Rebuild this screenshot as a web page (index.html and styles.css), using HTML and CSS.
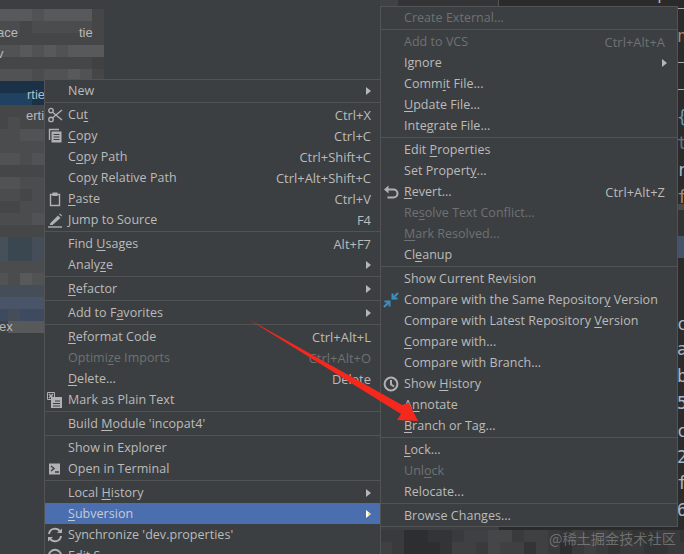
FILE: index.html
```html
<!DOCTYPE html>
<html lang="en">
<head>
<meta charset="utf-8">
<title>Context menu</title>
<link rel="stylesheet" href="styles.css">
</head>
<body>
<div class="screen">
  <div class="mosaic mosaic-top">
    <i class="e"></i><i class="e"></i><i class="e"></i><i class="d"></i><i class="e"></i><i class="e"></i><i class="e"></i><i class="e"></i><i class="b"></i>
    <i class="c"></i><i class="c"></i><i class="b"></i><i class="c"></i><i class="c"></i><i class="c"></i><i class="c"></i><i class="c"></i><i class="b"></i>
    <i class="b"></i><i class="b"></i><i class="b"></i><i class="b"></i><i class="b"></i><i class="b"></i><i class="b"></i><i class="b"></i><i class="b"></i>
    <i class="d"></i><i class="d"></i><i class="e"></i><i class="d"></i><i class="e"></i><i class="d"></i><i class="e"></i><i class="e"></i><i class="e"></i>
    <i class="b"></i><i class="b"></i><i class="b"></i><i class="b"></i><i class="b"></i><i class="b"></i><i class="b"></i><i class="b"></i><i class="a"></i>
    <i class="d"></i><i class="d"></i><i class="d"></i><i class="c"></i><i class="d"></i><i class="d"></i><i class="e"></i><i class="d"></i><i class="b"></i>
  </div>
  <div class="mosaic mosaic-left">
    <i class="g"></i><i class="g"></i><i class="g"></i><i class="g"></i>
    <i class="h"></i><i class="h"></i><i class="h"></i><i class="g"></i>
    <i class="b"></i><i class="b"></i><i class="b"></i><i class="b"></i>
    <i class="b"></i><i class="c"></i><i class="b"></i><i class="b"></i>
    <i class="c"></i><i class="c"></i><i class="d"></i><i class="d"></i>
    <i class="c"></i><i class="c"></i><i class="c"></i><i class="c"></i>
    <i class="d"></i><i class="d"></i><i class="c"></i><i class="d"></i>
    <i class="b"></i><i class="b"></i><i class="b"></i><i class="b"></i>
    <i class="d"></i><i class="d"></i><i class="c"></i><i class="c"></i>
    <i class="c"></i><i class="c"></i><i class="b"></i><i class="c"></i>
    <i class="b"></i><i class="b"></i><i class="c"></i><i class="c"></i>
    <i class="c"></i><i class="c"></i><i class="c"></i><i class="d"></i>
    <i class="b"></i><i class="b"></i><i class="b"></i><i class="b"></i>
    <i class="j"></i><i class="i"></i><i class="i"></i><i class="k"></i>
    <i class="j"></i><i class="i"></i><i class="i"></i><i class="k"></i>
    <i class="c"></i><i class="c"></i><i class="c"></i><i class="c"></i>
    <i class="d"></i><i class="c"></i><i class="e"></i><i class="d"></i>
    <i class="k"></i><i class="k"></i><i class="k"></i><i class="k"></i>
    <i class="l"></i><i class="l"></i><i class="l"></i><i class="l"></i>
    <i class="m"></i><i class="k"></i><i class="m"></i><i class="m"></i>
    <i class="a"></i><i class="e"></i><i class="e"></i><i class="e"></i>
  </div>
  <span class="frag frag-ace">ace</span>
  <span class="frag frag-tie">tie</span>
  <span class="frag frag-v">v</span>
  <span class="frag frag-rtie">rtie</span>
  <span class="frag frag-erti">erti</span>
  <span class="frag frag-ex">ex</span>

  <div class="tree-strip"></div>
  <div class="tree-panel"></div>
  <div class="editor">
    <span class="meta"><b>&lt;meta</b> http</span>
    <div class="rule rule-a"></div>
    <div class="rule rule-b"></div>
    <div class="rule rule-c"></div>
    <div class="band band-a"></div>
    <div class="band band-b"></div>
    <div class="band band-c"></div>
    <span class="ch ch-1 tan">n</span>
    <span class="ch ch-2 blue">{</span>
    <span class="ch ch-3 grey">t</span>
    <span class="ch ch-4">r</span>
    <span class="ch ch-5 tan">f</span>
    <span class="ch ch-6">c</span>
    <span class="ch ch-7">a</span>
    <span class="ch ch-8">b</span>
    <span class="ch ch-9">5</span>
    <span class="ch ch-10">c</span>
    <span class="ch ch-11">2</span>
    <span class="ch ch-12">f</span>
    <span class="ch ch-13">6</span>
  </div>

  <div class="mosaic mosaic-bottom">
    <i class="t3"></i><i class="t3"></i><i class="t1"></i><i class="t1"></i><i class="t2"></i><i class="t2"></i><i class="t3"></i><i class="t4"></i><i class="t4"></i><i class="t5"></i><i class="t5"></i><i class="t3"></i><i class="t4"></i><i class="t4"></i><i class="t3"></i><i class="t2"></i><i class="t4"></i><i class="t3"></i><i class="t4"></i><i class="t3"></i><i class="t3"></i><i class="t2"></i><i class="t2"></i><i class="t3"></i><i class="t3"></i><i class="t2"></i>
    <i class="t4"></i><i class="t3"></i><i class="t1"></i><i class="t1"></i><i class="t1"></i><i class="t2"></i><i class="t4"></i><i class="t4"></i><i class="t3"></i><i class="t5"></i><i class="t4"></i><i class="t4"></i><i class="t2"></i><i class="t4"></i><i class="t3"></i><i class="t1"></i><i class="t3"></i><i class="t4"></i><i class="t3"></i><i class="t2"></i><i class="t3"></i><i class="t3"></i><i class="t2"></i><i class="t2"></i><i class="t3"></i><i class="t3"></i>
  </div>
  <span class="ws-mark">@稀土掘金技术社区</span>

  <div class="menu menu-main">
    <div class="item"><span class="gut"></span><span class="lbl">New</span><span class="sub"></span></div>
    <div class="sep"></div>
    <div class="item"><span class="gut"><svg class="ic" viewBox="0 0 16 16"><circle cx="4" cy="3.6" r="2.2"/><circle cx="4" cy="12.4" r="2.2"/><path d="M5.6 5.2L15 13M5.6 10.8L15 3"/></svg></span><span class="lbl">Cu<u>t</u></span><span class="key">Ctrl+X</span></div>
    <div class="item"><span class="gut"><svg class="ic" viewBox="0 0 16 16"><path d="M2.5 12V1.5H12"/><path class="fill" d="M4.5 3.5H14.5V14.5H4.5Z"/><path class="cut" d="M6.5 6.5H12.5M6.5 9H12.5M6.5 11.5H12.5"/></svg></span><span class="lbl"><u>C</u>opy</span><span class="key">Ctrl+C</span></div>
    <div class="item"><span class="gut"></span><span class="lbl">C<u>o</u>py Path</span><span class="key">Ctrl+Shift+C</span></div>
    <div class="item"><span class="gut"></span><span class="lbl">Cop<u>y</u> Relative Path</span><span class="key">Ctrl+Alt+Shift+C</span></div>
    <div class="item"><span class="gut"><svg class="ic" viewBox="0 0 16 16"><path d="M3.5 3.5H12.5V14.5H3.5Z"/><path class="fill" d="M5.5 1.5H10.5V5H5.5Z"/></svg></span><span class="lbl"><u>P</u>aste</span><span class="key">Ctrl+V</span></div>
    <div class="item"><span class="gut"><svg class="ic" viewBox="0 0 16 16"><path class="fill" d="M3 11.5L11 3.5L13.5 6L5.5 13H3Z"/><path class="fill" d="M12 2.2L13 1.5L15 3.5L14.4 4.6Z"/><path d="M1 15H15"/></svg></span><span class="lbl">Jump to Source</span><span class="key">F4</span></div>
    <div class="sep"></div>
    <div class="item"><span class="gut"></span><span class="lbl">Find <u>U</u>sages</span><span class="key">Alt+F7</span></div>
    <div class="item"><span class="gut"></span><span class="lbl">Analy<u>z</u>e</span><span class="sub"></span></div>
    <div class="sep"></div>
    <div class="item"><span class="gut"></span><span class="lbl"><u>R</u>efactor</span><span class="sub"></span></div>
    <div class="sep"></div>
    <div class="item"><span class="gut"></span><span class="lbl">Add to F<u>a</u>vorites</span><span class="sub"></span></div>
    <div class="sep"></div>
    <div class="item"><span class="gut"></span><span class="lbl"><u>R</u>eformat Code</span><span class="key">Ctrl+Alt+L</span></div>
    <div class="item off"><span class="gut"></span><span class="lbl">Optimi<u>z</u>e Imports</span><span class="key">Ctrl+Alt+O</span></div>
    <div class="item"><span class="gut"></span><span class="lbl"><u>D</u>elete...</span><span class="key">Delete</span></div>
    <div class="item"><span class="gut"><svg class="ic" viewBox="0 0 16 16"><path class="fill" d="M4 5H15V16H4Z"/><path class="cut" d="M8 9H13M6 11.5H13M6 14H13"/><path class="box" d="M0.5 0.5H7.5V7.5H0.5Z"/><path d="M2 2L6 6M6 2L2 6"/></svg></span><span class="lbl">Mark as Plain Text</span></div>
    <div class="sep"></div>
    <div class="item"><span class="gut"></span><span class="lbl">Build <u>M</u>odule 'incopat4'</span></div>
    <div class="sep"></div>
    <div class="item"><span class="gut"></span><span class="lbl">Show in Explorer</span></div>
    <div class="item"><span class="gut"><svg class="ic" viewBox="0 0 16 16"><path class="fill" d="M2 2.5H13V13.5H2Z"/><path class="cut wide" d="M4 5L7 7.5L4 10M8 11H12"/></svg></span><span class="lbl">Open in Terminal</span></div>
    <div class="sep"></div>
    <div class="item"><span class="gut"></span><span class="lbl">Local <u>H</u>istory</span><span class="sub"></span></div>
    <div class="item on"><span class="gut"></span><span class="lbl"><u>S</u>ubversion</span><span class="sub"><span class="cursor-dot"></span></span></div>
    <div class="item"><span class="gut"><svg class="ic thick" viewBox="0 0 16 16"><path d="M2 7A6 6 0 0 1 13 4.5"/><path class="fill" d="M10 6H15V1.5Z"/><path d="M14 9A6 6 0 0 1 3 11.5"/><path class="fill" d="M6 10H1V14.5Z"/></svg></span><span class="lbl">Synchronize 'dev.properties'</span></div>
    <div class="item"><span class="gut"><svg class="ic thick" viewBox="0 0 16 16"><circle cx="8" cy="8" r="6.2"/><circle class="cyan" cx="8" cy="8" r="2.5"/></svg></span><span class="lbl">Edit S</span></div>
  </div>

  <div class="menu menu-vcs">
    <div class="item off"><span class="gut"></span><span class="lbl">Create External...</span></div>
    <div class="sep"></div>
    <div class="item off"><span class="gut"></span><span class="lbl">Add to VCS</span><span class="key">Ctrl+Alt+A</span></div>
    <div class="item"><span class="gut"></span><span class="lbl">Ignore</span><span class="sub"></span></div>
    <div class="item"><span class="gut"></span><span class="lbl">Comm<u>i</u>t File...</span></div>
    <div class="item"><span class="gut"></span><span class="lbl"><u>U</u>pdate File...</span></div>
    <div class="item"><span class="gut"></span><span class="lbl">Inte<u>g</u>rate File...</span></div>
    <div class="sep"></div>
    <div class="item"><span class="gut"></span><span class="lbl">Edit <u>P</u>roperties</span></div>
    <div class="item"><span class="gut"></span><span class="lbl">Set Propert<u>y</u>...</span></div>
    <div class="item"><span class="gut"><svg class="ic thick" viewBox="0 0 16 16"><path d="M4 5.5H10.5A4 4 0 0 1 10.5 13.5H4.5"/><path class="fill" d="M5.5 1.5V9.5L1 5.5Z"/></svg></span><span class="lbl"><u>R</u>evert...</span><span class="key">Ctrl+Alt+Z</span></div>
    <div class="item off"><span class="gut"></span><span class="lbl">Re<u>s</u>olve Text Conflict...</span></div>
    <div class="item off"><span class="gut"></span><span class="lbl"><u>M</u>ark Resolved...</span></div>
    <div class="item"><span class="gut"></span><span class="lbl">Cl<u>e</u>anup</span></div>
    <div class="sep"></div>
    <div class="item"><span class="gut"></span><span class="lbl">Show Current Revision</span></div>
    <div class="item"><span class="gut"><svg class="ic arrows" viewBox="0 0 16 16"><path d="M1.5 9.5H6.5V14.5"/><path d="M9.5 1.5V6.5H14.5"/><path d="M1 15L6.5 9.5M9.5 6.5L15 1"/></svg></span><span class="lbl">Compare with the Same Repositor<u>y</u> Version</span></div>
    <div class="item"><span class="gut"></span><span class="lbl">Compare with Latest Repository <u>V</u>ersion</span></div>
    <div class="item"><span class="gut"></span><span class="lbl"><u>C</u>ompare with...</span></div>
    <div class="item"><span class="gut"></span><span class="lbl">Compare with Branch...</span></div>
    <div class="item"><span class="gut"><svg class="ic thick" viewBox="0 0 16 16"><circle cx="8" cy="8" r="6.4"/><path d="M8 4V8.5L11 10.5"/></svg></span><span class="lbl">Show <u>H</u>istory</span></div>
    <div class="item"><span class="gut"></span><span class="lbl">A<u>n</u>notate</span></div>
    <div class="item"><span class="gut"></span><span class="lbl"><u>B</u>ranch or Tag...</span></div>
    <div class="sep"></div>
    <div class="item"><span class="gut"></span><span class="lbl"><u>L</u>ock...</span></div>
    <div class="item off"><span class="gut"></span><span class="lbl">Unl<u>o</u>ck</span></div>
    <div class="item"><span class="gut"></span><span class="lbl">Relocate...</span></div>
    <div class="sep"></div>
    <div class="item"><span class="gut"></span><span class="lbl">Browse Changes...</span></div>
  </div>

  <svg class="pointer" viewBox="0 0 684 554"><polygon points="248,319 402,405 409,403 418,421 397,420 401,414"/></svg>
</div>
</body>
</html>
```

FILE: styles.css
```css
html, body {
  margin: 0;
  padding: 0;
  background: #3c3f41;
}

.screen {
  position: relative;
  width: 684px;
  height: 554px;
  overflow: hidden;
  background: #3c3f41;
  font-family: "Open Sans", "Liberation Sans", sans-serif;
}

/* pixelated backdrop */
.mosaic {
  position: absolute;
  display: grid;
  grid-auto-rows: 12px;
}
.mosaic-top {
  left: -4px;
  top: 9px;
  grid-template-columns: repeat(9, 12px);
}
.mosaic-left {
  left: -4px;
  top: 81px;
  grid-template-columns: repeat(4, 12px);
}
.mosaic-bottom {
  left: 380px;
  top: 530px;
  grid-template-columns: repeat(26, 12px);
}
.a { background: #3f4143; }
.b { background: #444648; }
.c { background: #4a4c4e; }
.d { background: #505254; }
.e { background: #58595b; }
.g { background: #1b3147; }
.h { background: #20415f; }
.i { background: #3a4650; }
.j { background: #455058; }
.k { background: #454d58; }
.l { background: #4a5468; }
.m { background: #3e4a60; }
.t1 { background: #2d2e2f; }
.t2 { background: #333435; }
.t3 { background: #393a3b; }
.t4 { background: #3f4041; }
.t5 { background: #454647; }

.frag {
  position: absolute;
  font-family: "Liberation Sans", sans-serif;
  font-size: 13px;
  line-height: 14px;
  color: #b5b8ba;
}
.frag-ace { left: -3px; top: 26px; }
.frag-tie { left: 79px; top: 26px; }
.frag-v { left: -3px; top: 47px; }
.frag-rtie { left: 27px; top: 88px; color: #a9c0d2; }
.frag-erti { left: 26px; top: 109px; }
.frag-ex { left: -1px; top: 320px; }

/* panels behind the submenu */
.tree-strip {
  position: absolute;
  left: 380px;
  top: 0;
  width: 18px;
  height: 8px;
  background: #3f4346;
}
.tree-panel {
  position: absolute;
  left: 398px;
  top: 0;
  width: 100px;
  height: 8px;
  background: #333537;
  border-right: 1px solid #555;
}
.editor {
  position: absolute;
  left: 499px;
  top: 0;
  width: 185px;
  height: 530px;
  background: #2b2b2b;
  overflow: hidden;
}
.meta {
  position: absolute;
  left: 61px;
  top: -14px;
  font: 16px/20px "Liberation Mono", monospace;
  letter-spacing: 1.2px;
  color: #bababa;
}
.meta b {
  font-weight: 400;
  color: #e8bf6a;
}
.rule {
  position: absolute;
  left: 178px;
  width: 7px;
  height: 1px;
  background: #a9a9a9;
}
.rule-a { top: 8px; }
.rule-b { top: 62px; }
.rule-c { top: 89px; }
.band {
  position: absolute;
  left: 178px;
  width: 7px;
}
.band-a { top: 204px; height: 6px; background: #4b4b4b; }
.band-b { top: 210px; height: 26px; background: #323232; }
.band-c { top: 236px; height: 22px; background: #46526a; }
.ch {
  position: absolute;
  left: 178px;
  font: 17px/20px "DejaVu Sans Mono", monospace;
  color: #a9b7c6;
}
.ch-1 { top: 26px; }
.ch-2 { top: 107px; }
.ch-3 { top: 133px; }
.ch-4 { top: 160px; }
.ch-5 { top: 187px; }
.ch-6 { top: 314px; }
.ch-7 { top: 339px; }
.ch-8 { top: 366px; }
.ch-9 { top: 393px; }
.ch-10 { top: 421px; }
.ch-11 { top: 447px; }
.ch-12 { top: 473px; }
.ch-13 { top: 500px; }
.tan { color: #a58d6c; }
.blue { color: #6897bb; }
.grey { color: #6a7478; }

.ws-mark {
  position: absolute;
  left: 549px;
  top: 528px;
  font: 14.2px/20px "Noto Sans CJK SC", sans-serif;
  color: rgba(255, 255, 255, 0.28);
  white-space: nowrap;
}

/* menus */
.menu {
  position: absolute;
  box-sizing: border-box;
  background: #3c3f41;
  border: 1px solid #515354;
  color: #bbbbbb;
  font-size: 12.5px;
  letter-spacing: 0.03px;
}
.menu-main {
  left: 44px;
  top: 79px;
  width: 337px;
  height: 500px;
}
.menu-vcs {
  left: 380px;
  top: 6px;
  width: 298px;
  height: 521px;
}
.item {
  display: flex;
  align-items: center;
  height: 21px;
  white-space: nowrap;
}
.menu-main .item { padding-right: 9px; }
.menu-vcs .item { padding-right: 12px; }
.gut {
  flex: none;
  box-sizing: border-box;
  width: 23px;
  height: 16px;
  padding-right: 3px;
  display: flex;
  justify-content: center;
}
.lbl { flex: 1; }
.key {
  flex: none;
  font-size: 12.9px;
}
.off { color: #6f7173; }
.on {
  background: #4b6eaf;
  color: #c4cbd9;
}
.sep {
  height: 1px;
  margin: 1px 0;
  background: #515354;
}
.sub {
  position: relative;
  flex: none;
  width: 0;
  height: 0;
  border-left: 5px solid #b4b6b8;
  border-top: 4px solid transparent;
  border-bottom: 4px solid transparent;
}
.menu-vcs .sub { margin-right: -2px; }
.on .sub { border-left-color: #ffffff; }
.cursor-dot {
  position: absolute;
  left: -3px;
  top: -1px;
  width: 2px;
  height: 2px;
  background: #ffe14d;
}
u {
  text-underline-offset: 2px;
  text-decoration-thickness: 1px;
}

/* icons */
.ic {
  flex: none;
  width: 16px;
  height: 16px;
  fill: none;
  stroke: #afb1b3;
  stroke-width: 1.4;
}
.ic.thick { stroke-width: 2; }
.ic .fill {
  fill: #afb1b3;
  stroke: none;
}
.ic .cut {
  stroke: #3c3f41;
  stroke-width: 1;
}
.ic .cut.wide { stroke-width: 1.4; }
.ic .box { stroke-width: 1; }
.ic .cyan {
  fill: #3c8fa8;
  stroke: none;
}
.ic.arrows {
  stroke: #3592c4;
  stroke-width: 2;
}

/* red annotation arrow */
.pointer {
  position: absolute;
  left: 0;
  top: 0;
  width: 684px;
  height: 554px;
  pointer-events: none;
}
.pointer polygon {
  fill: #f5281e;
}
```
